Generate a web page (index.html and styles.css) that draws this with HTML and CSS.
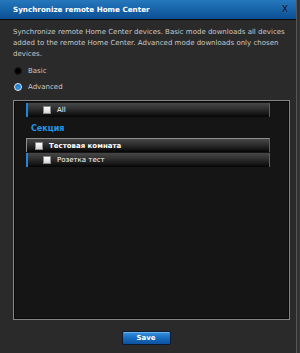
FILE: index.html
```html
<!DOCTYPE html>
<html>
<head>
<meta charset="utf-8">
<link rel="stylesheet" href="styles.css">
</head>
<body>
<div class="dialog">
  <div class="header">
    <span class="title">Synchronize remote Home Center</span>
    <span class="close">X</span>
  </div>
  <div class="content">
    <p class="desc">Synchronize remote Home Center devices. Basic mode downloads all devices added to the remote Home Center. Advanced mode downloads only chosen devices.</p>
    <div class="radios">
      <div class="radio-row"><span class="radio"></span><span>Basic</span></div>
      <div class="radio-row"><span class="radio on"></span><span>Advanced</span></div>
    </div>
    <div class="box">
      <div class="row leaf"><span class="check"></span><span class="label">All</span></div>
      <div class="section">Секция</div>
      <div class="row room"><span class="check"></span><span class="label bold">Тестовая комната</span></div>
      <div class="row leaf sub"><span class="check"></span><span class="label">Розетка тест</span></div>
    </div>
  </div>
  <div class="footer">
    <button class="save">Save</button>
  </div>
</div>
</body>
</html>
```

FILE: styles.css
```css
html, body {
  margin: 0;
  padding: 0;
}
body {
  width: 300px;
  height: 353px;
  overflow: hidden;
  background: #333333;
  font-family: "DejaVu Sans", Verdana, sans-serif;
}
.dialog {
  width: 297px;
  height: 353px;
  box-sizing: border-box;
  background: #2a2a2a;
  border-right: 1px solid #555555;
  display: flex;
  flex-direction: column;
}
.header {
  height: 20px;
  box-sizing: border-box;
  background: linear-gradient(#2678bd, #1763a8 50%, #0c4f93);
  border-bottom: 1px solid #0a0a0a;
  display: flex;
  align-items: center;
  justify-content: space-between;
  padding: 0 8px 1px 13px;
}
.title {
  color: #ffffff;
  font-weight: bold;
  font-size: 7.2px;
}
.close {
  color: #0d223d;
  font-weight: bold;
  font-size: 8px;
  text-shadow: 0 0 1px #6fa8dc;
}
.content {
  padding: 7px 7px 0 13px;
}
.desc {
  margin: 0;
  font-size: 7px;
  line-height: 11px;
  color: #c8c8c8;
}
.radios {
  margin-top: 3px;
}
.radio-row {
  height: 16px;
  display: flex;
  align-items: center;
  gap: 6px;
  font-size: 7px;
  color: #c8c8c8;
}
.radio {
  width: 8px;
  height: 8px;
  margin-left: 1px;
  border-radius: 50%;
  box-sizing: border-box;
  background: #000000;
  border: 1px solid #1a1a1a;
}
.radio.on {
  background: radial-gradient(circle at 50% 60%, #2f9bf0, #0d5fb0);
  border: 1px solid #e8f2fb;
}
.box {
  margin-top: 5px;
  width: 277px;
  height: 220px;
  box-sizing: border-box;
  background: #151515;
  border: 1px solid #858585;
  box-shadow: inset 0 0 0 1px #0a0a0a;
  padding: 2px 0 0 12px;
  display: flex;
  flex-direction: column;
}
.row {
  width: 244px;
  height: 14px;
  box-sizing: border-box;
  display: flex;
  align-items: center;
  background: linear-gradient(#474747, #333333 35%, #181818 75%, #050505);
  border-right: 1px solid #5e5e5e;
  font-size: 7px;
  color: #ffffff;
}
.row.leaf {
  border-left: 2px solid #1f86d8;
}
.row.leaf .check {
  margin-left: 15px;
}
.row.room {
  border-top: 1px solid #8e8e8e;
  border-left: 1px solid #8e8e8e;
  margin-top: 3px;
}
.row.room .check {
  margin-left: 8px;
}
.row.sub {
  margin-top: 1px;
}
.check {
  width: 8px;
  height: 8px;
  box-sizing: border-box;
  border: 1px solid #8a8a8a;
  background: linear-gradient(#ffffff, #d6d6d6);
  margin-right: 6px;
}
.label.bold {
  font-weight: bold;
}
.section {
  margin-top: 6px;
  height: 12px;
  line-height: 12px;
  padding-left: 5px;
  font-size: 8px;
  font-weight: bold;
  color: #2596e6;
}
.footer {
  display: flex;
  justify-content: center;
  padding: 11px 4px 0 0;
}
.save {
  width: 49px;
  height: 14px;
  padding: 0;
  box-sizing: border-box;
  border: 1px solid #0b1a2c;
  border-radius: 2px;
  background: linear-gradient(#3a94e0, #1a6fc2 45%, #0c529f);
  box-shadow: inset 0 1px 0 #6cb2ec;
  color: #ffffff;
  font-family: "DejaVu Sans", Verdana, sans-serif;
  font-weight: bold;
  font-size: 7px;
  line-height: 12px;
}
```
